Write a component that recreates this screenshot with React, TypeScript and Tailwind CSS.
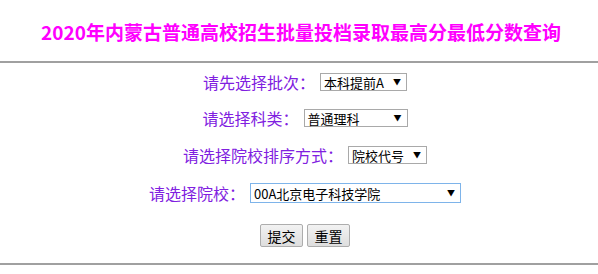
import React from 'react';

const cjk = '"Noto Sans CJK SC", "Liberation Sans", sans-serif';

function FakeSelect({ value, width, focused }: { value: string; width: string; focused?: boolean }) {
  return (
    <div
      className={`${width} flex items-center justify-between bg-white text-[13px] leading-none text-black pl-[3px] pr-[5px] ${
        focused ? 'h-[20px] border border-[#7eb4ea]' : 'h-[18px] border border-[#a9a9a9]'
      }`}
    >
      <span>{value}</span>
      <span className="text-[8px]">▼</span>
    </div>
  );
}

function Row({ label, children, height }: { label: string; children: React.ReactNode; height: string }) {
  return (
    <div className={`${height} flex items-center justify-center pl-[12px]`}>
      <span className="text-[16px] leading-none text-[#8020e0] mr-[5px]">{label}</span>
      {children}
    </div>
  );
}

export default function App() {
  return (
    <div className="w-[598px] h-[274px] bg-white overflow-hidden" style={{ fontFamily: cjk }}>
      <div className="h-[61px] flex items-center justify-center pt-[3px] pl-[4px]">
        <h2 className="text-[19px] font-bold text-[#ff00ff]">2020年内蒙古普通高校招生批量投档录取最高分最低分数查询</h2>
      </div>
      <div className="h-[2px] bg-[#a0a0a0]" />

      <div className="pt-[1px]">
        <Row label="请先选择批次：" height="h-[36px]">
          <FakeSelect value="本科提前A" width="w-[87px]" />
        </Row>
        <Row label="请选择科类：" height="h-[36px]">
          <FakeSelect value="普通理科" width="w-[104px]" />
        </Row>
        <Row label="请选择院校排序方式：" height="h-[38px]">
          <FakeSelect value="院校代号" width="w-[79px]" />
        </Row>
        <Row label="请选择院校：" height="h-[38px]">
          <FakeSelect value="00A北京电子科技学院" width="w-[211px]" focused />
        </Row>
        <div className="h-[47px] flex items-center justify-center gap-[4px] pl-[12px]">
          <button className="w-[43px] h-[23px] text-[14px] leading-none text-black bg-gradient-to-b from-[#f2f2f2] to-[#dedede] border border-[#adadad] rounded-[2px]">
            提交
          </button>
          <button className="w-[43px] h-[23px] text-[14px] leading-none text-black bg-gradient-to-b from-[#f2f2f2] to-[#dedede] border border-[#adadad] rounded-[2px]">
            重置
          </button>
        </div>
      </div>
      <div className="mt-[4px] h-[2px] bg-[#a0a0a0]" />
    </div>
  );
}
